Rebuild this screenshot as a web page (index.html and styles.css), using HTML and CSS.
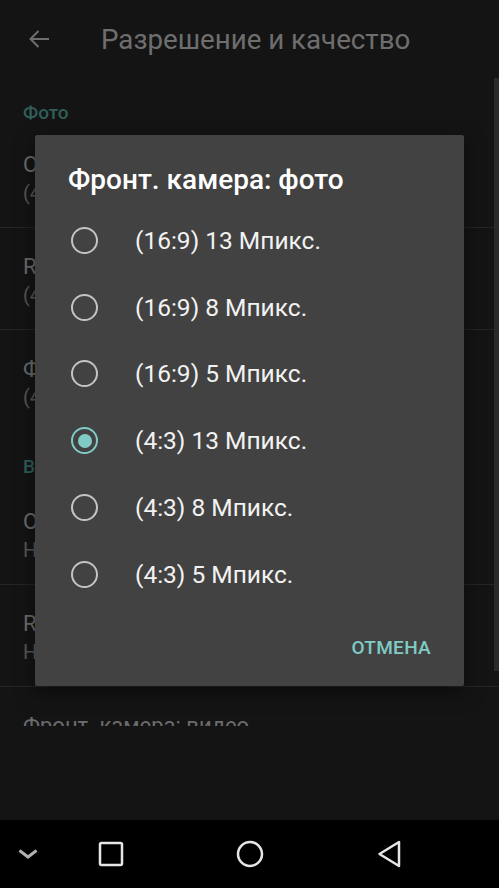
FILE: index.html
```html
<!DOCTYPE html>
<html lang="ru">
<head>
    <meta charset="UTF-8">
    <meta name="viewport" content="width=device-width, initial-scale=1.0">
    <title>Разрешение и качество</title>
    <link rel="stylesheet" href="styles.css">
</head>
<body>

<div class="screen">
    <div class="app">
        <div class="toolbar">
            <svg class="back-icon" width="24" height="24" viewBox="0 0 24 24">
                <path d="M22 12H3.5M11.5 4l-8 8 8 8" fill="none" stroke="#dcdcdc" stroke-width="2"/>
            </svg>
            <div class="toolbar-title">Разрешение и качество</div>
        </div>

        <div class="settings-list">
            <div class="category">Фото</div>
            <div class="pref">
                <div class="pref-title">Основная камера: фото</div>
                <div class="pref-summary">(4:3) 13 Мпикс.</div>
            </div>
            <div class="pref">
                <div class="pref-title">RAW фото</div>
                <div class="pref-summary">(4:3) 13 Мпикс.</div>
            </div>
            <div class="pref no-divider">
                <div class="pref-title">Фронт. камера: фото</div>
                <div class="pref-summary">(4:3) 13 Мпикс.</div>
            </div>
            <div class="category second">Видео</div>
            <div class="pref">
                <div class="pref-title">Основная камера: видео</div>
                <div class="pref-summary">HD 1080p</div>
            </div>
            <div class="pref">
                <div class="pref-title">Rear video quality</div>
                <div class="pref-summary">HD 1080p</div>
            </div>
            <div class="pref">
                <div class="pref-title">Фронт. камера: видео</div>
                <div class="pref-summary">HD 720p</div>
            </div>
            <div class="scrollbar"></div>
        </div>

        <div class="scrim"></div>

        <div class="dialog">
            <div class="dialog-title">Фронт. камера: фото</div>
            <div class="options">
                <div class="option"><span class="radio"></span><span class="option-text">(16:9) 13 Мпикс.</span></div>
                <div class="option"><span class="radio"></span><span class="option-text">(16:9) 8 Мпикс.</span></div>
                <div class="option"><span class="radio"></span><span class="option-text">(16:9) 5 Мпикс.</span></div>
                <div class="option"><span class="radio checked"></span><span class="option-text">(4:3) 13 Мпикс.</span></div>
                <div class="option"><span class="radio"></span><span class="option-text">(4:3) 8 Мпикс.</span></div>
                <div class="option"><span class="radio"></span><span class="option-text">(4:3) 5 Мпикс.</span></div>
            </div>
            <div class="dialog-actions">
                <button class="text-button">ОТМЕНА</button>
            </div>
        </div>
    </div>

    <div class="navbar">
        <svg width="24" height="24" viewBox="0 0 24 24" class="nav-chevron">
            <path d="M3.5 8.5l8.5 6.5 8.5-6.5" fill="none" stroke="#b0b0b0" stroke-width="3"/>
        </svg>
        <svg width="28" height="28" viewBox="0 0 28 28" class="nav-recent">
            <rect x="3" y="3" width="22" height="22" rx="1.5" fill="none" stroke="#e6e6e6" stroke-width="2.5"/>
        </svg>
        <svg width="30" height="30" viewBox="0 0 30 30" class="nav-home">
            <circle cx="15" cy="15" r="12" fill="none" stroke="#e6e6e6" stroke-width="2.5"/>
        </svg>
        <svg width="30" height="30" viewBox="0 0 30 30" class="nav-back">
            <path d="M23 3v24L3.5 15z" fill="none" stroke="#e6e6e6" stroke-width="2.5" stroke-linejoin="round"/>
        </svg>
    </div>
</div>

</body>
</html>
```

FILE: styles.css
```css
body {
    margin: 0;
    padding: 0;
    background-color: #000;
    font-family: Roboto, "Noto Sans", sans-serif;
}

.screen {
    width: 499px;
    height: 888px;
    display: flex;
    flex-direction: column;
    overflow: hidden;
}

.app {
    position: relative;
    flex: 1;
    background-color: #282828;
}

.toolbar {
    height: 78px;
    display: flex;
    align-items: center;
}

.back-icon {
    margin-left: 27px;
    margin-right: 50px;
}

.toolbar-title {
    color: #dcdcdc;
    font-size: 27.7px;
}

.settings-list {
    position: relative;
    height: 648px;
    overflow: hidden;
}

.scrollbar {
    position: absolute;
    right: 0;
    top: -1px;
    width: 5px;
    height: 594px;
    background-color: #555;
}

.category {
    color: #5fbcb0;
    font-size: 19px;
    font-weight: 500;
    padding: 23px 23px 0;
    height: 25px;
}

.category.second {
    height: 28px;
}

.pref {
    padding: 24px 23px 0;
    height: 77px;
    border-bottom: 1px solid #4a4a4a;
}

.pref.no-divider {
    border-bottom: 1px solid transparent;
}

.pref-title {
    color: #d8d8d8;
    font-size: 22px;
    line-height: 29px;
}

.pref-summary {
    color: #b0b0b0;
    font-size: 20px;
    line-height: 29px;
}

.scrim {
    position: absolute;
    inset: 0;
    background-color: rgba(0, 0, 0, 0.5);
}

.dialog {
    position: absolute;
    left: 35px;
    top: 135px;
    width: 429px;
    height: 551px;
    background-color: #424242;
    border-radius: 2px;
    box-shadow: 0 6px 20px rgba(0, 0, 0, 0.5);
    display: flex;
    flex-direction: column;
}

.dialog-title {
    color: #fff;
    font-size: 28px;
    font-weight: 500;
    line-height: 33px;
    padding: 28px 33px 0;
    height: 44px;
}

.options {
    display: flex;
    flex-direction: column;
}

.option {
    height: 66.8px;
    display: flex;
    align-items: center;
    padding-left: 36px;
}

.radio {
    box-sizing: border-box;
    width: 27px;
    height: 27px;
    border: 2.5px solid #c4c4c4;
    border-radius: 50%;
    display: flex;
    align-items: center;
    justify-content: center;
    margin-right: 37px;
}

.radio.checked {
    border-color: #80cbc4;
}

.radio.checked::after {
    content: "";
    width: 14px;
    height: 14px;
    border-radius: 50%;
    background-color: #80cbc4;
}

.option-text {
    color: #f2f2f2;
    font-size: 24.5px;
}

.dialog-actions {
    display: flex;
    justify-content: flex-end;
    padding: 28px 33px 0 0;
}

.text-button {
    background: none;
    border: none;
    padding: 0;
    color: #80cbc4;
    font-family: Roboto, "Noto Sans", sans-serif;
    font-size: 19px;
    font-weight: 500;
    letter-spacing: 0.3px;
    cursor: pointer;
}

.navbar {
    height: 68px;
    background-color: #000;
    display: flex;
    align-items: center;
}

.nav-chevron {
    margin-left: 16px;
}

.nav-recent {
    margin-left: 57px;
}

.nav-home {
    margin-left: 110px;
}

.nav-back {
    margin-left: 111px;
}
```
